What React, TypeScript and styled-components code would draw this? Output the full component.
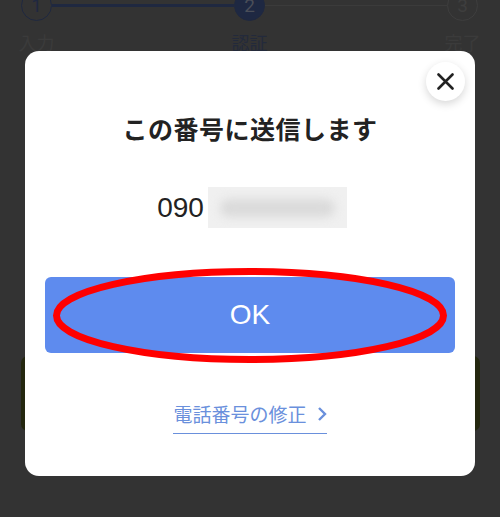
import React from 'react';
import styled, { createGlobalStyle } from 'styled-components';

const GlobalStyle = createGlobalStyle`
  html, body {
    margin: 0;
    padding: 0;
    background: #333333;
  }
  body {
    font-family: "Noto Sans", "Noto Sans CJK JP", sans-serif;
    overflow: hidden;
  }
`;

const Page = styled.div`
  display: grid;
  width: 500px;
  height: 517px;
  overflow: hidden;
  background: #333333;

  > * {
    grid-area: 1 / 1;
  }
`;

/* dimmed page behind the modal */
const Backdrop = styled.div`
  display: flex;
  flex-direction: column;
`;

const Stepper = styled.div`
  display: flex;
  align-items: flex-start;
  margin-top: -10px;
  padding: 0 22px 0 21px;
`;

const Step = styled.div`
  display: flex;
  flex-direction: column;
  align-items: center;
  width: 31px;
`;

const StepCircle = styled.div<{ $state: 'done' | 'active' | 'todo' }>`
  display: flex;
  align-items: center;
  justify-content: center;
  box-sizing: border-box;
  width: 31px;
  height: 31px;
  border-radius: 50%;
  font-family: Roboto, "Liberation Sans", sans-serif;
  font-size: 19px;
  border: 1.5px solid
    ${(p) => (p.$state === 'todo' ? '#3e3e3e' : '#1f2840')};
  background: ${(p) => (p.$state === 'active' ? '#1e2842' : 'transparent')};
  color: ${(p) =>
    p.$state === 'active' ? '#4a4e58' : p.$state === 'done' ? '#1f2840' : '#3e3e3e'};
`;

const StepLabel = styled.div<{ $active?: boolean }>`
  margin-top: 10px;
  white-space: nowrap;
  font-size: 18px;
  line-height: 22px;
  font-family: "Noto Sans CJK JP", sans-serif;
  color: ${(p) => (p.$active ? '#232a3b' : '#3b3b3b')};
`;

const Connector = styled.div<{ $done?: boolean }>`
  flex: 1;
  margin-top: ${(p) => (p.$done ? '14px' : '15px')};
  height: ${(p) => (p.$done ? '3px' : '1px')};
  background: ${(p) => (p.$done ? '#1f2840' : '#3b3b3b')};
`;

const Notice = styled.div`
  margin: 303px 20px 0 21px;
  height: 75px;
  border-radius: 7px;
  background: #24270f;
`;

/* modal */
const Modal = styled.div`
  position: relative;
  box-sizing: border-box;
  display: flex;
  flex-direction: column;
  align-items: stretch;
  align-self: start;
  margin: 51px 0 0 25px;
  width: 450px;
  height: 425px;
  padding: 60px 20px 0;
  border-radius: 14px;
  background: #ffffff;
`;

const CloseButton = styled.button`
  position: absolute;
  top: 11px;
  right: 10px;
  display: flex;
  align-items: center;
  justify-content: center;
  width: 39px;
  height: 39px;
  padding: 0;
  border: none;
  border-radius: 50%;
  background: #ffffff;
  box-shadow: 0 3px 8px rgba(0, 0, 0, 0.16);
  cursor: pointer;
`;

const Title = styled.h2`
  margin: 0;
  text-align: center;
  font-family: "Noto Sans CJK JP", sans-serif;
  font-size: 25px;
  line-height: 34px;
  font-weight: 700;
  color: #222222;
  letter-spacing: 0.5px;
`;

const PhoneRow = styled.div`
  display: flex;
  align-items: center;
  justify-content: center;
  gap: 4px;
  margin-top: 42px;
  padding-left: 4px;
  height: 41px;
`;

const PhonePrefix = styled.span`
  font-family: "Liberation Sans", Arial, sans-serif;
  font-size: 28px;
  color: #222222;
`;

const Masked = styled.div`
  position: relative;
  width: 139px;
  height: 41px;
  overflow: hidden;
  background: #f0f0f0;
`;

const Smudge = styled.span`
  position: absolute;
  left: 12px;
  right: 12px;
  top: 12px;
  height: 18px;
  border-radius: 9px;
  background: #dadada;
  filter: blur(5px);
`;

const ButtonWrap = styled.div`
  position: relative;
  margin-top: 49px;
`;

const OkButton = styled.button`
  display: flex;
  align-items: center;
  justify-content: center;
  width: 100%;
  height: 76px;
  border: none;
  border-radius: 6px;
  background: #5e8bee;
  color: #ffffff;
  font-family: "Liberation Sans", Arial, sans-serif;
  font-size: 28px;
  font-weight: 400;
  cursor: pointer;
`;

const Annotation = styled.svg`
  position: absolute;
  left: 8px;
  top: -9px;
  width: 394px;
  height: 95px;
  overflow: visible;
  pointer-events: none;
`;

const EditLink = styled.a`
  display: flex;
  align-items: center;
  gap: 10px;
  align-self: center;
  margin-top: 49px;
  padding-bottom: 7px;
  border-bottom: 1.5px solid #6a90dc;
  font-family: "Noto Sans CJK JP", sans-serif;
  font-size: 19px;
  font-weight: 400;
  line-height: 24px;
  color: #6a90dc;
  text-decoration: none;
  cursor: pointer;
`;

const steps = [
  { n: 1, label: '入力', state: 'done' as const },
  { n: 2, label: '認証', state: 'active' as const },
  { n: 3, label: '完了', state: 'todo' as const },
];

export default function App() {
  return (
    <Page>
      <GlobalStyle />
      <Backdrop>
        <Stepper>
          {steps.map((s, i) => (
            <React.Fragment key={s.n}>
              {i > 0 && <Connector $done={i === 1} />}
              <Step>
                <StepCircle $state={s.state}>{s.n}</StepCircle>
                <StepLabel $active={s.state === 'active'}>{s.label}</StepLabel>
              </Step>
            </React.Fragment>
          ))}
        </Stepper>
        <Notice />
      </Backdrop>

      <Modal>
        <CloseButton aria-label="閉じる">
          <svg width="17" height="17" viewBox="0 0 17 17">
            <path d="M1.5 1.5 L15.5 15.5 M15.5 1.5 L1.5 15.5" stroke="#222" strokeWidth="2.6" strokeLinecap="round" />
          </svg>
        </CloseButton>

        <Title>この番号に送信します</Title>

        <PhoneRow>
          <PhonePrefix>090</PhonePrefix>
          <Masked>
            <Smudge />
          </Masked>
        </PhoneRow>

        <ButtonWrap>
          <OkButton>OK</OkButton>
          <Annotation viewBox="0 0 394 95">
            <ellipse cx="197" cy="47.5" rx="193.5" ry="44" fill="none" stroke="#ff0000" strokeWidth="7" />
          </Annotation>
        </ButtonWrap>

        <EditLink>
          電話番号の修正
          <svg width="10" height="16" viewBox="0 0 10 16">
            <path d="M2 2 L8 8 L2 14" fill="none" stroke="#6a90dc" strokeWidth="2.4" />
          </svg>
        </EditLink>
      </Modal>
    </Page>
  );
}
